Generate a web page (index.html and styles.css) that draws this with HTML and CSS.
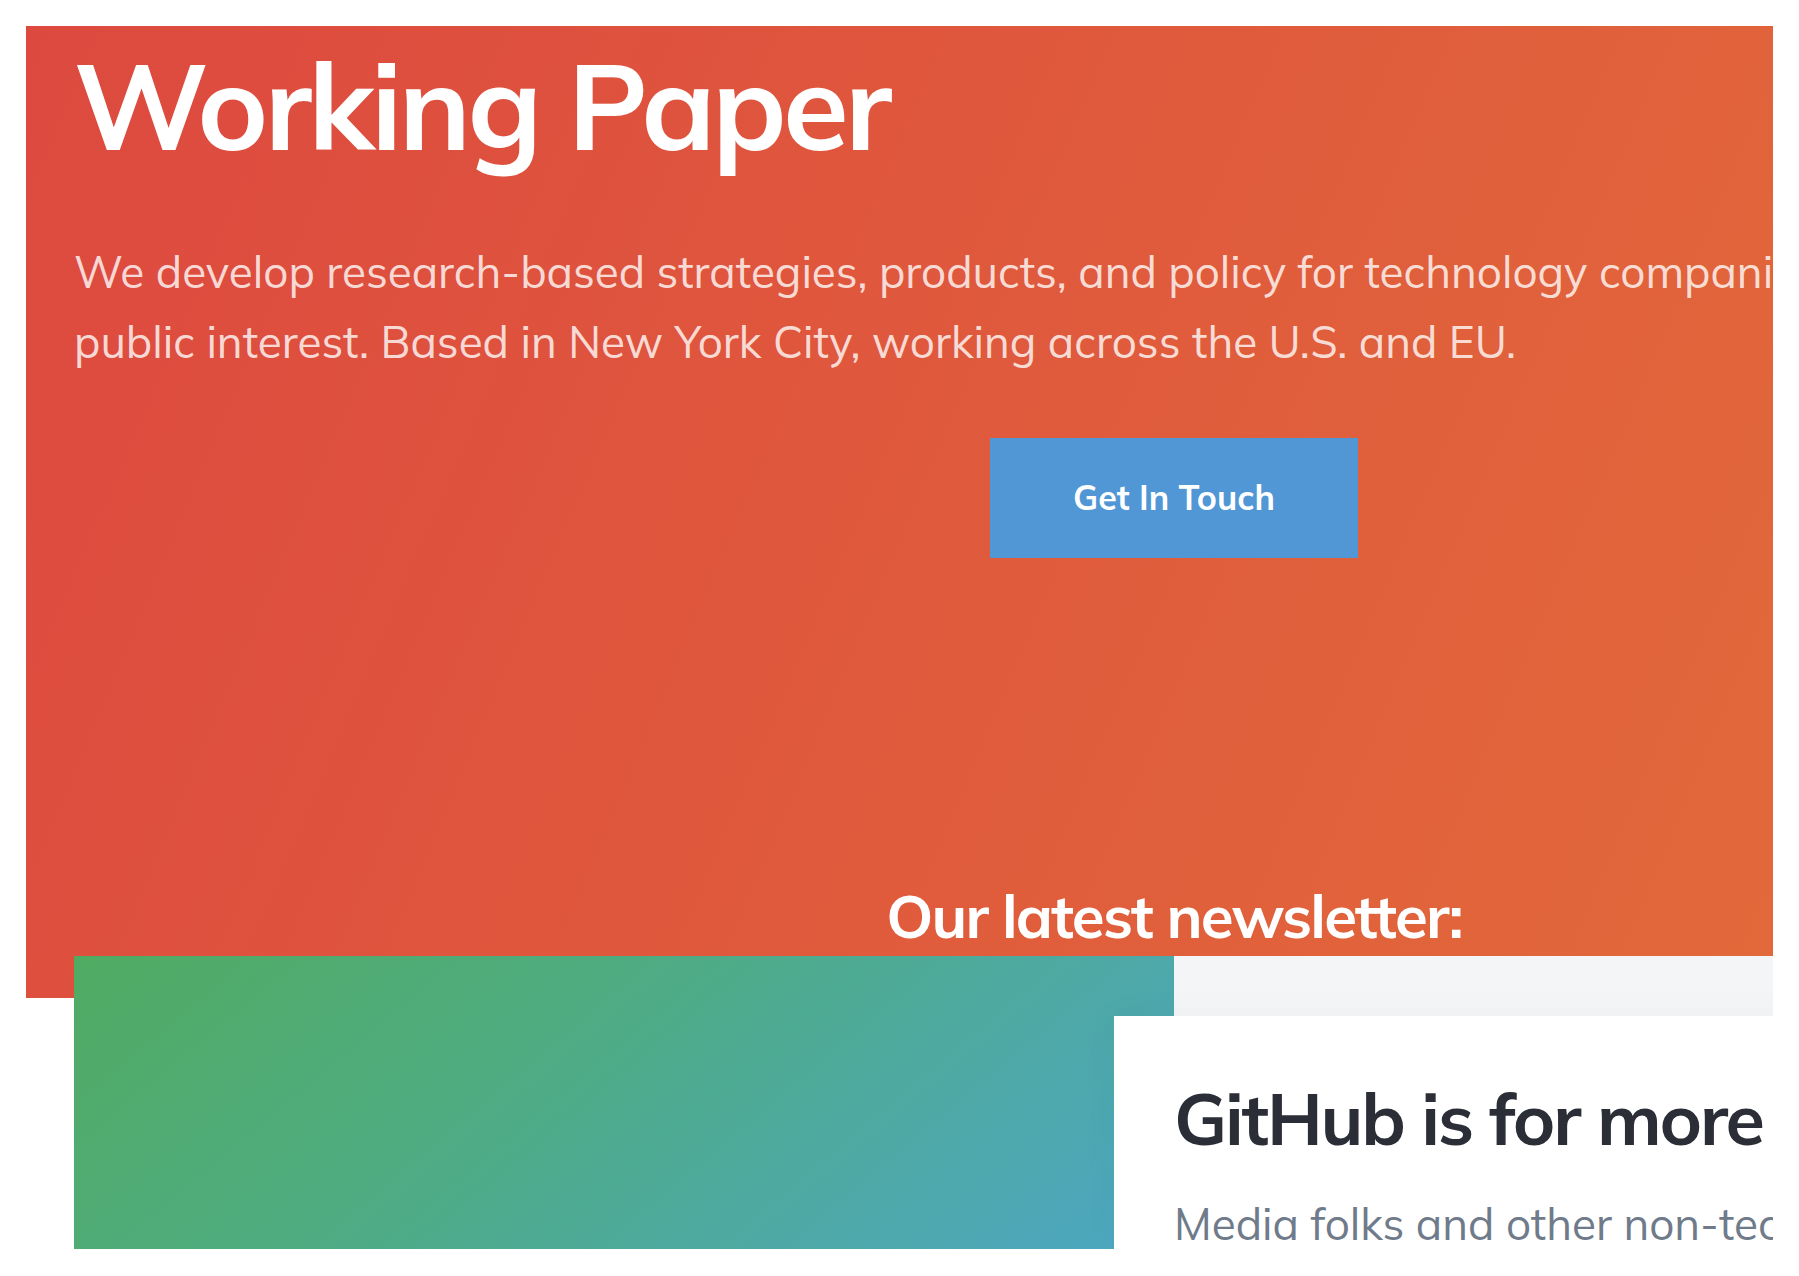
FILE: index.html
```html
<!DOCTYPE html>
<html lang="en">
<head>
<meta charset="utf-8">
<title>Working Paper</title>
<link rel="stylesheet" href="styles.css">
</head>
<body>
<main class="frame">
  <div class="page">
    <header class="hero">
      <h1 class="hero-title">Working Paper</h1>
      <p class="hero-text">We develop research-based strategies, products, and policy for technology companies in the<br>public interest. Based in New York City, working across the U.S. and EU.</p>
      <button class="cta" type="button">Get In Touch</button>
      <h2 class="hero-subtitle">Our latest newsletter:</h2>
    </header>
    <section class="feature">
      <div class="feature-art"></div>
      <div class="feature-side">
        <article class="feature-card">
          <h3 class="feature-title">GitHub is for more</h3>
          <p class="feature-text">Media folks and other non-tech</p>
        </article>
      </div>
    </section>
  </div>
</main>
</body>
</html>
```

FILE: styles.css
```css
* {
  box-sizing: border-box;
  margin: 0;
}

body {
  padding: 26px;
  background: #fff;
  font-family: Muli, Mulish, Lato, sans-serif;
}

h1,
h2,
h3 {
  font-weight: 700;
  letter-spacing: -0.03em;
}

.frame {
  overflow: hidden;
}

/* The page is wider than the frame, which clips its right side. */
.page {
  width: calc(100% + 549px);
}

.hero {
  display: flex;
  flex-direction: column;
  align-items: center;
  padding: 0 48px 43px;
  background: linear-gradient(113deg, #dd493f, #e37139);
  color: #fff;
}

.hero-title {
  align-self: stretch;
  font-size: 120px;
  line-height: 158px;
}

.hero-text {
  align-self: stretch;
  margin-top: 53px;
  font-size: 44px;
  line-height: 70px;
  white-space: nowrap;
  color: rgba(255, 255, 255, 0.8);
}

.cta {
  margin-top: 61px;
  padding: 36px 83px;
  border: 0;
  background: #5196d5;
  color: #fff;
  font: inherit;
  font-size: 34px;
  line-height: 48px;
  font-weight: 700;
}

.hero-subtitle {
  margin-top: 319px;
  font-size: 60px;
  line-height: 78px;
}

.feature {
  display: grid;
  grid-template-columns: 1fr 1fr;
  height: 293px;
  margin: -42px 48px 0;
}

.feature-art {
  background: linear-gradient(140deg, #50ab62, #4fac80 38%, #4ca6c8 104%);
}

.feature-side {
  background: #f4f5f7;
}

.feature-card {
  height: 233px;
  margin: 60px 0 0 -60px;
  padding: 60px;
  background: #fff;
  box-shadow: 0 0 40px rgba(0, 0, 0, 0.03);
  white-space: nowrap;
}

.feature-title {
  font-size: 72px;
  line-height: 84px;
  color: #2b2e36;
}

.feature-text {
  margin-top: 29px;
  font-size: 44px;
  line-height: 70px;
  color: #6f7b8a;
}
```
